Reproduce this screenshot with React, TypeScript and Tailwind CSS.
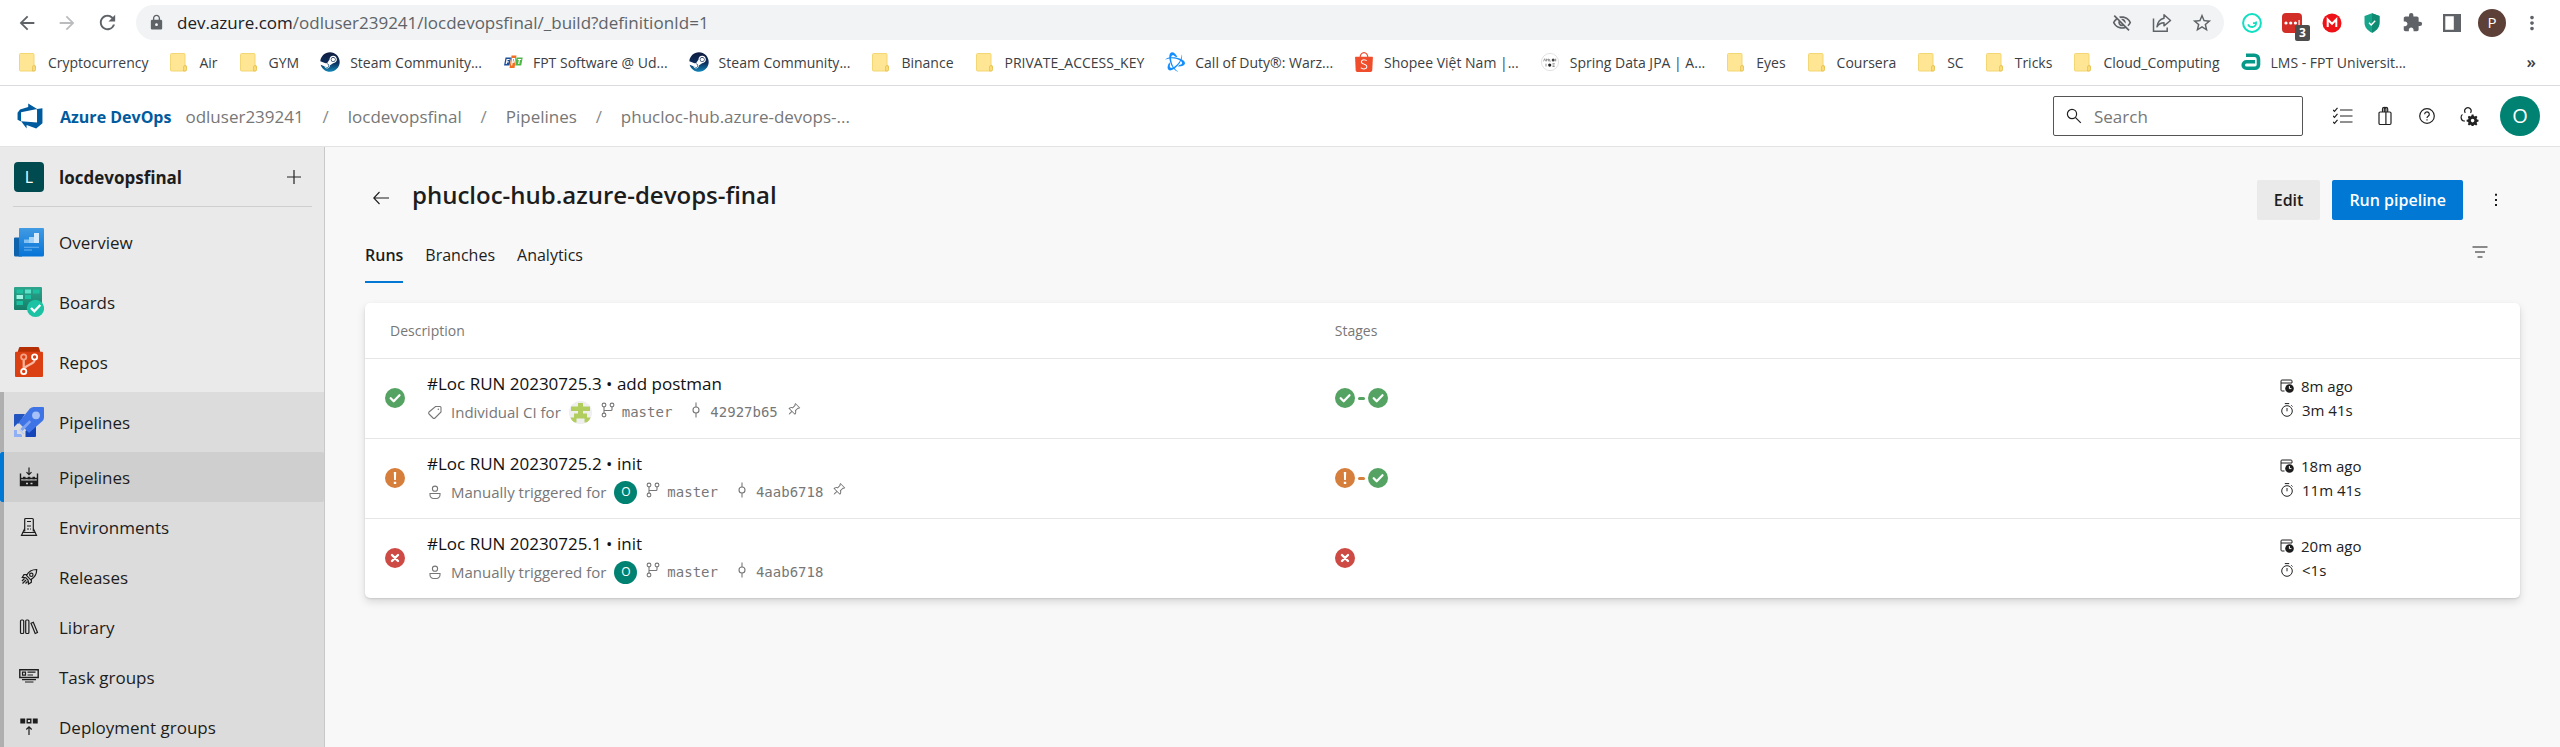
import type { ReactNode } from "react";
import { FaSteam } from "react-icons/fa";
import { SiBattledotnet, SiShopee } from "react-icons/si";
import { MdExtension, MdLock, MdOutlineVisibilityOff, MdStarBorder, MdArrowBack, MdArrowForward, MdRefresh, MdMoreVert } from "react-icons/md";
import { VscPinned } from "react-icons/vsc";

/* ---------- browser bar ---------- */

function FolderIcon() {
  return (
    <svg viewBox="0 0 20 20" className="size-5">
      <path d="M2.500 1.500h12.500a1 1 0 0 1 1 1V13l1.500 1v3.500a1.500 1.500 0 0 1-1.500 1.500H2.500a1 1 0 0 1-1-1V2.500a1 1 0 0 1 1-1z" fill="#ffe694" stroke="#f4d775" strokeWidth="1" />
      <path d="M14.500 19v-4a1.500 1.500 0 0 1 3 0v2.500a1.500 1.500 0 0 1-1.500 1.500z" fill="#fbdc7a" stroke="#e3bd52" strokeWidth=".7" />
    </svg>
  );
}

function SteamIcon() {
  return (
    <span className="size-5">
      <svg className="absolute size-0">
        <linearGradient id="steam" x1="0" y1="0" x2="0" y2="1">
          <stop offset="0" stopColor="#0f1c3f" />
          <stop offset=".55" stopColor="#0d2f5c" />
          <stop offset="1" stopColor="#1387b8" />
        </linearGradient>
      </svg>
      <FaSteam className="size-5 fill-[url(#steam)]" />
    </span>
  );
}

function FptIcon() {
  return (
    <svg viewBox="0 0 20 20" className="size-5">
      <path d="M2.500 5.500H8l-1.500 8H1z" fill="#1c4f9c" />
      <path d="M8.500 3.500h5l-2 12.500h-5z" fill="#f26f21" />
      <path d="M13.500 5.500h6.200l-1.500 8h-6z" fill="#4fb748" />
      <path d="M3.200 12l.9-4.500h2.500M3.700 9.800h2M8.600 13.500l1-7h2l-.6 3.600H9.300M14.800 7.500h3.400M16.500 7.500l-.8 4.500" fill="none" stroke="#fff" strokeWidth="1.200" />
    </svg>
  );
}

function SpringIcon() {
  return (
    <svg viewBox="0 0 20 20" className="size-5">
      <circle cx="10" cy="10" r="8.600" fill="#fff" stroke="#d9dadc" strokeWidth=".8" />
      <path d="M3.500 9.300l1.200-2.600 1 2.600M6.500 9.300V6.800l1 1.400 1-1.400v2.500M9.600 7v2.200h1.200" fill="none" stroke="#888" strokeWidth=".8" />
      <circle cx="13.200" cy="8" r="1.500" fill="#444" />
      <path d="M15.700 6.700v2.600" stroke="#777" strokeWidth=".9" />
      <path d="M6 11.700v2.800M12.500 11.700h2.200M12.500 13.100h2M12.500 14.500h2.200" stroke="#777" strokeWidth=".8" />
      <circle cx="9.700" cy="13.100" r="1.600" fill="#222" />
    </svg>
  );
}

function LmsIcon() {
  return (
    <svg viewBox="0 0 20 20" className="size-5">
      <path d="M5 3.200h8.500a4 4 0 0 1 4 4v5.600a3.500 3.500 0 0 1-3.500 3.500H5.500a3.300 3.300 0 0 1 0-6.600H14" fill="none" stroke="#06998a" strokeWidth="3.600" />
      <path d="M6 12.900h7" stroke="#fff" strokeWidth="1" />
    </svg>
  );
}

const bookmarks: { label: string; icon?: ReactNode }[] = [
  { label: "Cryptocurrency" },
  { label: "Air" },
  { label: "GYM" },
  { label: "Steam Community...", icon: <SteamIcon /> },
  { label: "FPT Software @ Ud...", icon: <FptIcon /> },
  { label: "Steam Community...", icon: <SteamIcon /> },
  { label: "Binance" },
  { label: "PRIVATE_ACCESS_KEY" },
  { label: "Call of Duty®: Warz...", icon: <SiBattledotnet className="size-5 text-[#148eff]" /> },
  { label: "Shopee Việt Nam |...", icon: <SiShopee className="size-5 text-[#f04d2d]" /> },
  { label: "Spring Data JPA | A...", icon: <SpringIcon /> },
  { label: "Eyes" },
  { label: "Coursera" },
  { label: "SC" },
  { label: "Tricks" },
  { label: "Cloud_Computing" },
  { label: "LMS - FPT Universit...", icon: <LmsIcon /> },
];

function ChromeButton({ label, children }: { label: string; children: ReactNode }) {
  return (
    <button type="button" aria-label={label} className="flex w-10 shrink-0 items-center justify-center text-[#5f6368]">
      {children}
    </button>
  );
}

function Browser() {
  return (
    <div className="shrink-0 border-b border-[#d9dbde] bg-white">
      <div className="flex h-[45px] items-center pr-2 pl-[7px]">
        <ChromeButton label="Back"><MdArrowBack className="size-[22px]" /></ChromeButton>
        <ChromeButton label="Forward"><MdArrowForward className="size-[22px] text-[#babcbe]" /></ChromeButton>
        <ChromeButton label="Reload"><MdRefresh className="size-[23px]" /></ChromeButton>
        <div className="mr-2 ml-[9px] flex h-[35px] flex-1 items-center rounded-full bg-[#f1f3f4] pr-0.5 pl-3">
          <MdLock className="size-[17px] text-[#5f6368]" />
          <span className="ml-3 flex-1 text-[17px] text-[#5f6368]">
            <span className="text-[#202124]">dev.azure.com</span>/odluser239241/locdevopsfinal/_build?definitionId=1
          </span>
          <ChromeButton label="Third-party cookies blocked"><MdOutlineVisibilityOff className="size-5" /></ChromeButton>
          <ChromeButton label="Share this page">
            <svg viewBox="0 0 20 20" className="size-5" fill="none" stroke="currentColor" strokeWidth="1.500">
              <path d="M1.500 5.500v12.700h13.700v-3.700" />
              <path d="M12 1.800l6.500 5.700-6.500 5.300V9.800c-3 0-5.300 1.300-7 4 .6-4.400 3-7.600 7-8.500z" strokeLinejoin="round" />
            </svg>
          </ChromeButton>
          <ChromeButton label="Bookmark this tab"><MdStarBorder className="size-[22px]" /></ChromeButton>
        </div>
        <ChromeButton label="Grammarly">
          <svg viewBox="0 0 20 20" className="size-5" fill="none" stroke="#11dfc2">
            <circle cx="10" cy="10" r="8.900" strokeWidth="2" />
            <path d="M14 8.500c.6 3.500-1 5.500-3.700 5.500-2 0-3.500-1-4.300-2.700M11 10.200h3" strokeWidth="1.800" />
          </svg>
        </ChromeButton>
        <ChromeButton label="Password manager, 3 items">
          <span className="relative flex size-5 items-center justify-center rounded-sm bg-[#d32d27]">
            <svg viewBox="0 0 20 20" className="size-5" fill="#fff">
              <circle cx="4" cy="10" r="1.600" /><circle cx="8.700" cy="10" r="1.600" /><circle cx="13.400" cy="10" r="1.600" /><path d="M16.500 7h1.200v6h-1.200z" />
            </svg>
            <span className="absolute -right-2 -bottom-2 flex h-4 w-[15px] items-center justify-center rounded-xs bg-[#4d4d4d] text-[12px] leading-none font-bold text-white">3</span>
          </span>
        </ChromeButton>
        <ChromeButton label="MEGA">
          <svg viewBox="0 0 20 20" className="size-5">
            <circle cx="10" cy="10" r="9.500" fill="#ef1118" />
            <path d="M5.700 14V6.500L10 10.800l4.300-4.300V14" fill="none" stroke="#fff" strokeWidth="2" />
          </svg>
        </ChromeButton>
        <ChromeButton label="VPN shield">
          <svg viewBox="0 0 20 20" className="size-5">
            <path d="M10 .3l7.500 2.700v6.500c0 4.500-2.800 8-7.500 10.300C5.300 17.500 2.500 14 2.500 9.500V3z" fill="#16a58a" />
            <path d="M10 .3l7.500 2.700v6.500c0 4.500-2.800 8-7.500 10.300z" fill="#0f8b74" />
            <path d="M7 9.800l2.200 2.200 4-4.200" fill="none" stroke="#fff" strokeWidth="1.400" />
          </svg>
        </ChromeButton>
        <ChromeButton label="Extensions"><MdExtension className="size-[21px]" /></ChromeButton>
        <ChromeButton label="Side panel">
          <svg viewBox="0 0 18 18" className="size-[18px]">
            <path d="M0 0h18v18H0zM2.300 2.300v13.400h8.500V2.300z" fill="currentColor" fillRule="evenodd" />
          </svg>
        </ChromeButton>
        <ChromeButton label="Profile">
          <span className="flex size-7 shrink-0 items-center justify-center rounded-full bg-[#5d4037] text-[15px] text-white">P</span>
        </ChromeButton>
        <ChromeButton label="Browser menu"><MdMoreVert className="size-[22px]" /></ChromeButton>
      </div>
      <nav aria-label="Bookmarks" className="flex h-10 items-center gap-[21px] pr-6 pb-1.5 pl-[18px] text-[14px] text-[#3c4043]">
        {bookmarks.map((b, i) => (
          <a key={i} href="#" className="flex shrink-0 items-center gap-[10px] whitespace-nowrap">
            {b.icon ?? <FolderIcon />}
            {b.label}
          </a>
        ))}
        <button type="button" aria-label="More bookmarks" className="ml-auto text-[17px] font-semibold">»</button>
      </nav>
    </div>
  );
}

/* ---------- product header ---------- */

function HeaderButton({ label, children }: { label: string; children: ReactNode }) {
  return (
    <button type="button" aria-label={label} className="flex h-10 w-[42px] items-center justify-center text-[#222]">
      <svg viewBox="0 0 20 20" className="size-5" fill="none" stroke="currentColor" strokeWidth="1.200">{children}</svg>
    </button>
  );
}

const gear = (
  <path
    fill="currentColor"
    stroke="none"
    fillRule="evenodd"
    d="M12.700 8.500h1.800l.3 1.500 1 .5 1.400-.7 1.200 1.300-.8 1.300.4 1 1.500.4v1.700l-1.500.4-.4 1 .8 1.300-1.200 1.200-1.400-.7-1 .4-.3 1.500h-1.800l-.4-1.500-1-.4-1.300.7-1.200-1.200.7-1.300-.4-1-1.500-.4v-1.700l1.500-.4.4-1-.7-1.300L10 9.800l1.300.7 1-.5zM13.600 12.800a1.800 1.800 0 1 0 0 3.600 1.800 1.800 0 0 0 0-3.600z"
  />
);

function Header() {
  const crumbs = ["odluser239241", "locdevopsfinal", "Pipelines", "phucloc-hub.azure-devops-..."];
  return (
    <header className="flex h-[61px] shrink-0 items-center border-b border-[#e3e3e3] bg-white pr-5 pl-4">
      <a href="#" className="flex items-center gap-4 text-[16px] font-bold text-[#005a9e]">
        <svg viewBox="0 0 18 18" className="size-7" fill="#005a9e">
          <path d="M17 4v9.740l-4 3.280-6.200-2.260V17l-3.510-4.590 10.230.8V4.440zm-3.410.490L7.850 1v2.290L2.580 4.840 1 6.870v4.610l2.260 1V6.570z" />
        </svg>
        <span className="pt-0.5">Azure DevOps</span>
      </a>
      <nav aria-label="Breadcrumb" className="ml-[14px] flex items-center pt-0.5 text-[17px] text-[#777]">
        {crumbs.map((c, i) => (
          <span key={c} className="flex items-center">
            {i > 0 && <span className="w-11 text-center text-[#8a8a8a]">/</span>}
            <a href="#">{c}</a>
          </span>
        ))}
      </nav>
      <div className="ml-auto flex h-10 w-[250px] items-center gap-3 rounded-xs border border-[#555] pl-3">
        <svg viewBox="0 0 16 16" className="size-4" fill="none" stroke="#222" strokeWidth="1.200">
          <circle cx="6" cy="6" r="4.600" />
          <path d="M9.300 9.300l5.500 5.500" />
        </svg>
        <input type="search" aria-label="Search" placeholder="Search" className="min-w-0 flex-1 pt-0.5 text-[17px] outline-none placeholder:text-[#777]" />
      </div>
      <div className="ml-[19px] flex items-center">
        <HeaderButton label="My work items">
          <path d="M7 4H19.500M7 10H19.500M7 16H19.500M0 3.800l1.500 1.500 3-3.500M0 9.800l1.500 1.500 3-3.500M0 15.800l1.500 1.500 3-3.500" />
        </HeaderButton>
        <HeaderButton label="Marketplace">
          <rect x="4" y="6" width="12" height="12.500" rx="1.200" />
          <path d="M7.500 6V3a1.700 1.700 0 0 1 3.400 0v15.500M9.300 6V3a1.700 1.700 0 0 1 3.400 0v3" />
        </HeaderButton>
        <HeaderButton label="Help">
          <circle cx="10" cy="10" r="7.300" />
          <path d="M7.700 8.200a2.300 2.300 0 1 1 3.700 1.800c-.9.700-1.400 1.100-1.400 2.100M10 13.200v1.400" />
        </HeaderButton>
        <HeaderButton label="User settings">
          <path d="M6.300 6.800A3.200 3.200 0 1 1 11.500 6.800M3.500 8.500C1.500 9.500 1.500 14.500 4.800 15H6" />
          {gear}
        </HeaderButton>
      </div>
      <button type="button" aria-label="Account" className="ml-[10px] size-10 rounded-full bg-[#008272] text-[20px] text-white">O</button>
    </header>
  );
}

/* ---------- sidebar ---------- */

const overviewIcon = (
  <svg viewBox="0 0 30 30" className="size-[30px]">
    <defs><linearGradient id="ov" x1="0" y1="0" x2="0" y2="1"><stop offset="0" stopColor="#429be3" /><stop offset="1" stopColor="#0573d6" /></linearGradient></defs>
    <path d="M0 11.500a1 1 0 0 1 1-1h7v19H1.500A1.500 1.500 0 0 1 0 28z" fill="#0f62ac" />
    <path d="M6 1h23a1 1 0 0 1 1 1v26a1.500 1.500 0 0 1-1.500 1.500H4.500L5 28V2a1 1 0 0 1 1-1z" fill="url(#ov)" />
    <path d="M10 12.500h5V16h-5z" fill="#83c1f3" /><path d="M15 10h5v6h-5z" fill="#a5d3f7" /><path d="M20 6h5v10h-5z" fill="#d5ebfc" />
    <path d="M10 19.700h15v1.100H10zM10 22.500h8v1.100h-8z" fill="#6fb4ef" />
  </svg>
);

const boardsIcon = (
  <svg viewBox="0 0 30 30" className="size-[30px]">
    <defs><linearGradient id="bd" x1="0" y1="0" x2="0" y2="1"><stop offset="0" stopColor="#2fa58d" /><stop offset="1" stopColor="#147f69" /></linearGradient></defs>
    <rect width="28" height="23" rx="1" fill="url(#bd)" />
    <path d="M2.500 2.500h6.500v4H2.500zM19 2.500h6.500v4H19zM11 8h6v4h-6zM2.500 14h6.500v4H2.500z" fill="#1cc0a0" />
    <path d="M11 2.500h6v4h-6z" fill="#5be2c8" /><path d="M2.500 8h6.500v4H2.500z" fill="#9ff5e3" />
    <circle cx="21.500" cy="21.300" r="8.600" fill="#1bc3a4" />
    <path d="M17 21l3.300 3.300 6-6.300" fill="none" stroke="#fff" strokeWidth="2.400" />
  </svg>
);

const reposIcon = (
  <svg viewBox="0 0 30 30" className="size-[30px]">
    <path d="M6 0h18a1 1 0 0 1 1 .7L26.500 5.500h-23L5 .7A1 1 0 0 1 6 0z" fill="#b52f04" />
    <rect x="1" y="4.800" width="28" height="25.200" rx="1" fill="#db4013" />
    <g fill="none" strokeWidth="1.800"><path d="M9.700 12.800v9M20.600 12.800c0 5-7.500 4-10 8.500" stroke="#f9b9a1" strokeWidth="2.200" /><circle cx="9.700" cy="10" r="2.600" stroke="#f5a387" /><circle cx="20.600" cy="10" r="2.600" stroke="#fff" /><circle cx="9.700" cy="24.500" r="2.600" stroke="#fff" /></g>
  </svg>
);

const pipelinesIcon = (
  <svg viewBox="0 0 30 30" className="size-[30px]">
    <path d="M0 8a1 1 0 0 1 1-1h10l-6 9.500H3.500L0 20z" fill="#2355c0" />
    <path d="M11.500 24L22 16v13a1 1 0 0 1-1 1h-9.500z" fill="#1545b8" />
    <path d="M16 1.500A5 5 0 0 1 19.500 0H29a1 1 0 0 1 1 1v9.500a5 5 0 0 1-1.500 3.500L15 26 4.500 15.500z" fill="#3f74e6" />
    <path d="M15.500 13.200l1.700 1.700-8.500 9-2.200-2.200z" fill="#7da3f2" />
    <circle cx="22" cy="8.300" r="3.900" fill="#a6c0f8" />
    <path d="M0 23h3v4h5v3H1a1 1 0 0 1-1-1z" fill="#8fb0f6" /><path d="M3.500 19.500l7.500 7.500-1 3L0 20.500z" fill="#dcdcdc" /><path d="M5.500 22.500l4.500 4.500" stroke="#b8ccf9" strokeWidth="1.500" />
    <path d="M0 23.500h3v3.500h4v3H1a1 1 0 0 1-1-1z" fill="#8fb0f6" />
  </svg>
);

const services = [
  { label: "Overview", icon: overviewIcon },
  { label: "Boards", icon: boardsIcon },
  { label: "Repos", icon: reposIcon },
];

const pages: { label: string; art: ReactNode }[] = [
  {
    label: "Pipelines",
    art: (
      <>
        <path d="M10 .5v7M7.500 5.200L10 7.700l2.500-2.500" />
        <path d="M1.500 6.500v12h17v-12M18 11.500H2" strokeWidth="1.400" />
        <path d="M1.500 13.500h17v5.500h-17z" fill="currentColor" stroke="none" />
        <path d="M4 11h2.500M8.700 11h2.600M13.500 11H16" strokeWidth="2.500" />
        <path d="M7 16.500h2M11.500 16.500h2" stroke="#cfcfcf" strokeWidth="1.600" />
      </>
    ),
  },
  { label: "Environments", art: <><path d="M5.700 14.500v-12a1 1 0 0 1 1-1h6.600a1 1 0 0 1 1 1v12M5.500 12l-3 6.300h15l-3-6.300M3.200 15.500h13.600" /><path d="M8 4.500h4M8 9h4M8 12h2M11 12h1" /></> },
  { label: "Releases", art: <><path d="M7.500 8.500C9.500 4.500 12.500 2.500 17.700 2.500c0 5-2 8-6 10.300z" /><circle cx="12.300" cy="7.800" r="1.700" /><path d="M8 7.500L5 7.700 3.300 10.500l3.500.2M12.500 12.300l-.2 3-2.800 1.700-.2-3.500M6.700 10.700l2.600 2.800M5.500 11.500l-2.500 2.500M7 13l-3.500 3.500M8.500 14.500L6.500 16.500" /></> },
  { label: "Library", art: <><rect x="1.500" y="3" width="3.200" height="13.500" rx="1" /><rect x="6.700" y="3" width="3.200" height="13.500" rx="1" /><path d="M12 6.200l2.300-1 4.200 10.300-2.300 1z" /></> },
  { label: "Task groups", art: <><path d="M.8 2.800h18.400v7.700H.8z" strokeWidth="1.400" /><path d="M3.500 5.200h3v3h-3zM8.500 5.200h8M8.500 8h5.500M3 12.700h14M6 15h8.500" /></> },
  { label: "Deployment groups", art: <><path d="M1.300 1.500h4.900v4.900H1.300zM13.800 1.500h4.900v4.900h-4.900z" fill="currentColor" stroke="none" /><path d="M8.200 2.200h3.600v3.600H8.200z" strokeWidth="1.400" /><path d="M10 18v-8M7.300 12.500L10 9.800l2.700 2.700" /></> },
];

function Sidebar() {
  return (
    <aside className="flex w-[325px] shrink-0 flex-col border-r border-[#c8c8c8] bg-[#eaeaea] text-[17px] text-[#1d1d1d]">
      <div className="mr-3 ml-[13px] flex h-[60px] shrink-0 items-center border-b border-[#cfcfcf]">
        <span className="ml-px flex size-[30px] items-center justify-center rounded bg-[#004b50] text-[16px] text-white">L</span>
        <span className="ml-[15px] flex-1 pt-0.5 font-bold">locdevopsfinal</span>
        <button type="button" aria-label="Add new" className="mr-[10px] text-[#222]">
          <svg viewBox="0 0 16 16" className="size-4" stroke="currentColor" strokeWidth="1.200"><path d="M8 1v14M1 8h14" /></svg>
        </button>
      </div>
      <nav aria-label="Services" className="pt-[5px]">
        {services.map((s) => (
          <a key={s.label} href="#" className="flex h-[60px] items-center gap-[15px] pl-[14px]">
            {s.icon}
            <span className="pt-0.5">{s.label}</span>
          </a>
        ))}
        <div className="bg-[#dcdcdc]">
          <a href="#" className="flex h-[60px] items-center gap-[15px] border-l-4 border-[#afafaf] pl-[10px] font-medium">
            {pipelinesIcon}
            <span className="pt-0.5">Pipelines</span>
          </a>
          {pages.map((p, i) => (
            <a
              key={p.label}
              href="#"
              aria-current={i === 0 ? "page" : undefined}
              className={
                i === 0
                  ? "flex h-[50px] items-center gap-5 rounded-xs border-l-4 border-[#0078d4] bg-[#cfcfcf] pl-[15px] font-medium"
                  : "flex h-[50px] items-center gap-5 border-l-4 border-[#afafaf] pl-[15px]"
              }
            >
              <svg viewBox="0 0 20 20" className="size-5" fill="none" stroke="currentColor" strokeWidth="1.200">{p.art}</svg>
              <span className="pt-0.5">{p.label}</span>
            </a>
          ))}
        </div>
      </nav>
    </aside>
  );
}

/* ---------- runs ---------- */

type Status = "ok" | "warn" | "fail";

function StatusIcon({ status }: { status: Status }) {
  return (
    <svg viewBox="0 0 20 20" className="size-5 shrink-0" role="img" aria-label={status === "ok" ? "Success" : status === "warn" ? "Warning" : "Failed"}>
      <circle cx="10" cy="10" r="10" fill={status === "ok" ? "#55a362" : status === "warn" ? "#d67f3c" : "#cd4a45"} />
      {status === "ok" && <path d="M5.700 10.300l3 3 5.800-6" fill="none" stroke="#fff" strokeWidth="2.300" strokeLinecap="round" strokeLinejoin="round" />}
      {status === "warn" && <path d="M8.800 4h2.400l-.3 8H9.100zM8.800 13.700h2.400V16H8.800z" fill="#fff" />}
      {status === "fail" && <path d="M7 7l6 6M13 7l-6 6" stroke="#fff" strokeWidth="2.400" strokeLinecap="round" />}
    </svg>
  );
}

function Identicon() {
  return (
    <span className="size-[23px] shrink-0 overflow-hidden rounded-full bg-[#efefef]">
      <svg viewBox="0 0 23 23" className="size-full" fill="#b0cd5e">
        <path d="M9 2h5v3.500h7v4.500h-7V12.500h4v4h3.500v5H15.500v-4h-8v4H1.500v-5H5v-4h4V10H2V5.500h7z" />
      </svg>
    </span>
  );
}

const runs: { name: string; reason: string; bot: boolean; sha: string; pinned: boolean; stages: Status[]; ago: string; took: string }[] = [
  { name: "#Loc RUN 20230725.3 • add postman", reason: "Individual CI for", bot: true, sha: "42927b65", pinned: true, stages: ["ok", "ok"], ago: "8m ago", took: "3m 41s" },
  { name: "#Loc RUN 20230725.2 • init", reason: "Manually triggered for", bot: false, sha: "4aab6718", pinned: true, stages: ["warn", "ok"], ago: "18m ago", took: "11m 41s" },
  { name: "#Loc RUN 20230725.1 • init", reason: "Manually triggered for", bot: false, sha: "4aab6718", pinned: false, stages: ["fail"], ago: "20m ago", took: "<1s" },
];

function RunRow({ run }: { run: (typeof runs)[number] }) {
  return (
    <tr className="h-20 border-t border-[#e6e6e6]">
      <td className="pl-5">
        <div className="flex items-center gap-[22px]">
          <StatusIcon status={run.stages[0]} />
          <div className="flex flex-col gap-1">
            <a href="#" className="text-[17px] leading-6 font-medium text-[#111]">{run.name}</a>
            <div className="flex h-6 items-center text-[15px] text-[#777]">
              {run.bot ? (
                <svg viewBox="0 0 16 16" className="size-4" fill="none" stroke="currentColor" strokeWidth="1.100">
                  <path d="M8.500 2.500h4.500a1 1 0 0 1 1 1v4.500l-6 6a1.500 1.500 0 0 1-2 0l-4-4a1.500 1.500 0 0 1 0-2z" />
                  <path d="M11.300 5.200h.1" strokeLinecap="round" strokeWidth="1.500" />
                </svg>
              ) : (
                <svg viewBox="0 0 16 16" className="size-4" fill="none" stroke="currentColor" strokeWidth="1.100">
                  <circle cx="8" cy="4.700" r="2.600" />
                  <path d="M3 9.500h10v1.500a3.500 3.500 0 0 1-3.500 3.500h-3A3.500 3.500 0 0 1 3 11z" />
                </svg>
              )}
              <span className="mr-2 ml-2">{run.reason}</span>
              {run.bot ? (
                <Identicon />
              ) : (
                <span className="flex size-[23px] items-center justify-center rounded-full bg-[#008272] text-[12px] text-white">O</span>
              )}
              <svg viewBox="0 0 16 16" className="mb-1 ml-2 size-4" fill="none" stroke="currentColor" strokeWidth="1.100">
                <circle cx="4" cy="3" r="1.900" /><circle cx="12" cy="3" r="1.900" /><circle cx="4" cy="13" r="1.900" />
                <path d="M4 5v6M12 5v2.500a1 1 0 0 1-1 1H4" />
              </svg>
              <span className="ml-1.5 font-['DejaVu_Sans_Mono',monospace] text-[14px]">master</span>
              <svg viewBox="0 0 16 16" className="mb-1 ml-4 size-4" fill="none" stroke="currentColor" strokeWidth="1.100">
                <circle cx="8" cy="8" r="3" /><path d="M8 .5v4.500M8 11v4.500" />
              </svg>
              <span className="ml-1.5 font-['DejaVu_Sans_Mono',monospace] text-[14px]">{run.sha}</span>
              {run.pinned && <VscPinned className="mb-1 ml-2 size-4 rotate-45" />}
            </div>
          </div>
        </div>
      </td>
      <td>
        <div className="flex items-center gap-[3px]">
          {run.stages.map((s, i) => (
            <span key={i} className="flex items-center gap-[3px]">
              {i > 0 && <span className={run.stages[0] === "ok" ? "h-[3px] w-[7px] rounded-full bg-[#55a362]" : "h-[3px] w-[7px] rounded-full bg-[#d67f3c]"} />}
              <StatusIcon status={s} />
            </span>
          ))}
        </div>
      </td>
      <td className="text-[15px] leading-6 text-[#222]">
        <div className="flex items-center gap-[7px]">
          <svg viewBox="0 0 14 14" className="size-[14px]" fill="none" stroke="currentColor">
            <path d="M4.500 12H2a1 1 0 0 1-1-1V2a1 1 0 0 1 1-1h9a1 1 0 0 1 1 1v2M1 4h11" />
            <circle cx="9.500" cy="9.500" r="4.300" fill="#1d1d1d" stroke="none" />
            <path d="M9.400 7v2.600h2" stroke="#fff" />
          </svg>
          {run.ago}
        </div>
        <div className="flex items-center gap-[8px]">
          <svg viewBox="0 0 14 14" className="size-[14px]" fill="none" stroke="currentColor">
            <circle cx="7" cy="8" r="5.300" /><path d="M7 5v3.300M4.800.6h4.400M11.300 2.300l1.200 1.200" />
          </svg>
          {run.took}
        </div>
      </td>
    </tr>
  );
}

function Runs() {
  return (
    <main className="flex-1 bg-[#f8f8f8] px-10 pt-[33px] text-[#1d1d1d]">
      <div className="flex h-10 items-start">
        <button type="button" aria-label="Back to pipelines" className="flex h-9 w-8 items-center justify-center">
          <svg viewBox="0 0 16 16" className="size-4" fill="none" stroke="currentColor" strokeWidth="1.100"><path d="M16 8H.8M6.500 2L.8 8l5.700 6" /></svg>
        </button>
        <h1 className="ml-[15px] flex-1 text-[24px] leading-[30px] font-semibold">phucloc-hub.azure-devops-final</h1>
        <button type="button" className="h-10 rounded-xs bg-[#eaeaea] px-[17px] text-[16px] font-semibold">Edit</button>
        <button type="button" className="ml-3 h-10 rounded-xs bg-[#0078d4] px-[17px] text-[16px] font-semibold text-white">Run pipeline</button>
        <button type="button" aria-label="More actions" className="mr-1 ml-[13px] flex size-10 items-center justify-center">
          <svg viewBox="0 0 16 16" className="size-4" fill="currentColor"><path d="M7 1.700h2v2H7zM7 6.900h2v2H7zM7 12.100h2v2H7z" /></svg>
        </button>
      </div>
      <div className="mt-2 flex h-[55px] text-[16px]">
        <div role="tablist" className="flex gap-[22px]">
          <button type="button" role="tab" aria-selected="true" className="border-b-2 border-[#0078d4] font-semibold">Runs</button>
          <button type="button" role="tab" aria-selected="false" className="border-b-2 border-transparent">Branches</button>
          <button type="button" role="tab" aria-selected="false" className="border-b-2 border-transparent">Analytics</button>
        </div>
        <button type="button" aria-label="Filter" className="mt-1 mr-5 ml-auto flex size-10 items-center justify-center">
          <svg viewBox="0 0 16 16" className="size-4" stroke="currentColor" strokeWidth="1.200"><path d="M.5 3h15M3 8h10M5.500 13h5" /></svg>
        </button>
      </div>
      <div className="mt-5 overflow-hidden rounded-[5px] bg-white shadow-[0_4px_9px_rgba(0,0,0,0.13),0_1px_2px_rgba(0,0,0,0.11)]">
        <table className="w-full table-fixed">
          <thead>
            <tr className="h-[55px] text-left text-[14px] text-[#777]">
              <th scope="col" className="w-[45%] pl-[25px] font-normal">Description</th>
              <th scope="col" className="font-normal">Stages</th>
              <th scope="col" aria-label="Time" className="w-60" />
            </tr>
          </thead>
          <tbody>
            {runs.map((r) => <RunRow key={r.name} run={r} />)}
          </tbody>
        </table>
      </div>
    </main>
  );
}

export default function App() {
  return (
    <div className="flex h-screen flex-col overflow-hidden font-['Open_Sans','Noto_Sans',sans-serif]">
      <Browser />
      <Header />
      <div className="flex min-h-0 flex-1">
        <Sidebar />
        <Runs />
      </div>
    </div>
  );
}
